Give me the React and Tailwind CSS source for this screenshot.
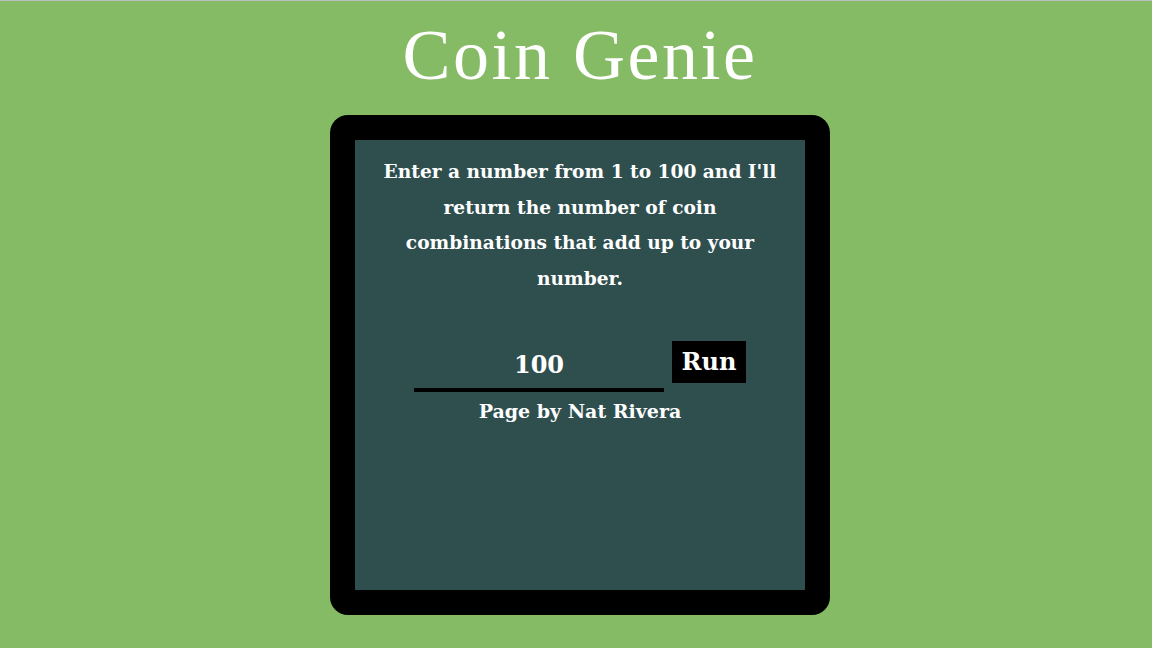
import { useState } from "react";

const App = () => {
  const [value, setValue] = useState("100");

  return (
    <div className="min-h-screen w-full bg-[#85bb65] border-t border-[#bdbdbd] pl-[8px] flex flex-col items-center font-['Liberation_Serif',serif] text-white">
      <h1 className="mt-[14px] text-[72px] leading-[80px] tracking-[2.5px] font-normal">
        Coin Genie
      </h1>

      <div className="mt-[20px] w-[500px] h-[500px] bg-black rounded-[18px] p-[25px]">
        <div className="h-full w-full bg-[#2f4f4f] flex flex-col items-center pt-[14px]">
          <p className="text-center font-['DejaVu_Serif',serif] font-bold text-[18.6px] leading-[35.7px]">
            Enter a number from 1 to 100 and I'll
            <br />
            return the number of coin
            <br />
            combinations that add up to your
            <br />
            number.
          </p>

          <div className="mt-[44px] flex items-start gap-[8px]">
            <input
              type="text"
              value={value}
              onChange={(e) => setValue(e.target.value)}
              className="w-[250px] h-[51px] bg-transparent border-b-4 border-black text-center text-white font-['DejaVu_Serif',serif] font-bold text-[24px] focus:outline-none"
            />
            <button className="w-[74px] h-[42px] bg-black text-white font-['DejaVu_Serif',serif] font-bold text-[24px]">
              Run
            </button>
          </div>

          <p className="mt-[5px] font-['DejaVu_Serif',serif] font-bold text-[19px] leading-[28px]">
            Page by Nat Rivera
          </p>
        </div>
      </div>
    </div>
  );
};

export default App;
